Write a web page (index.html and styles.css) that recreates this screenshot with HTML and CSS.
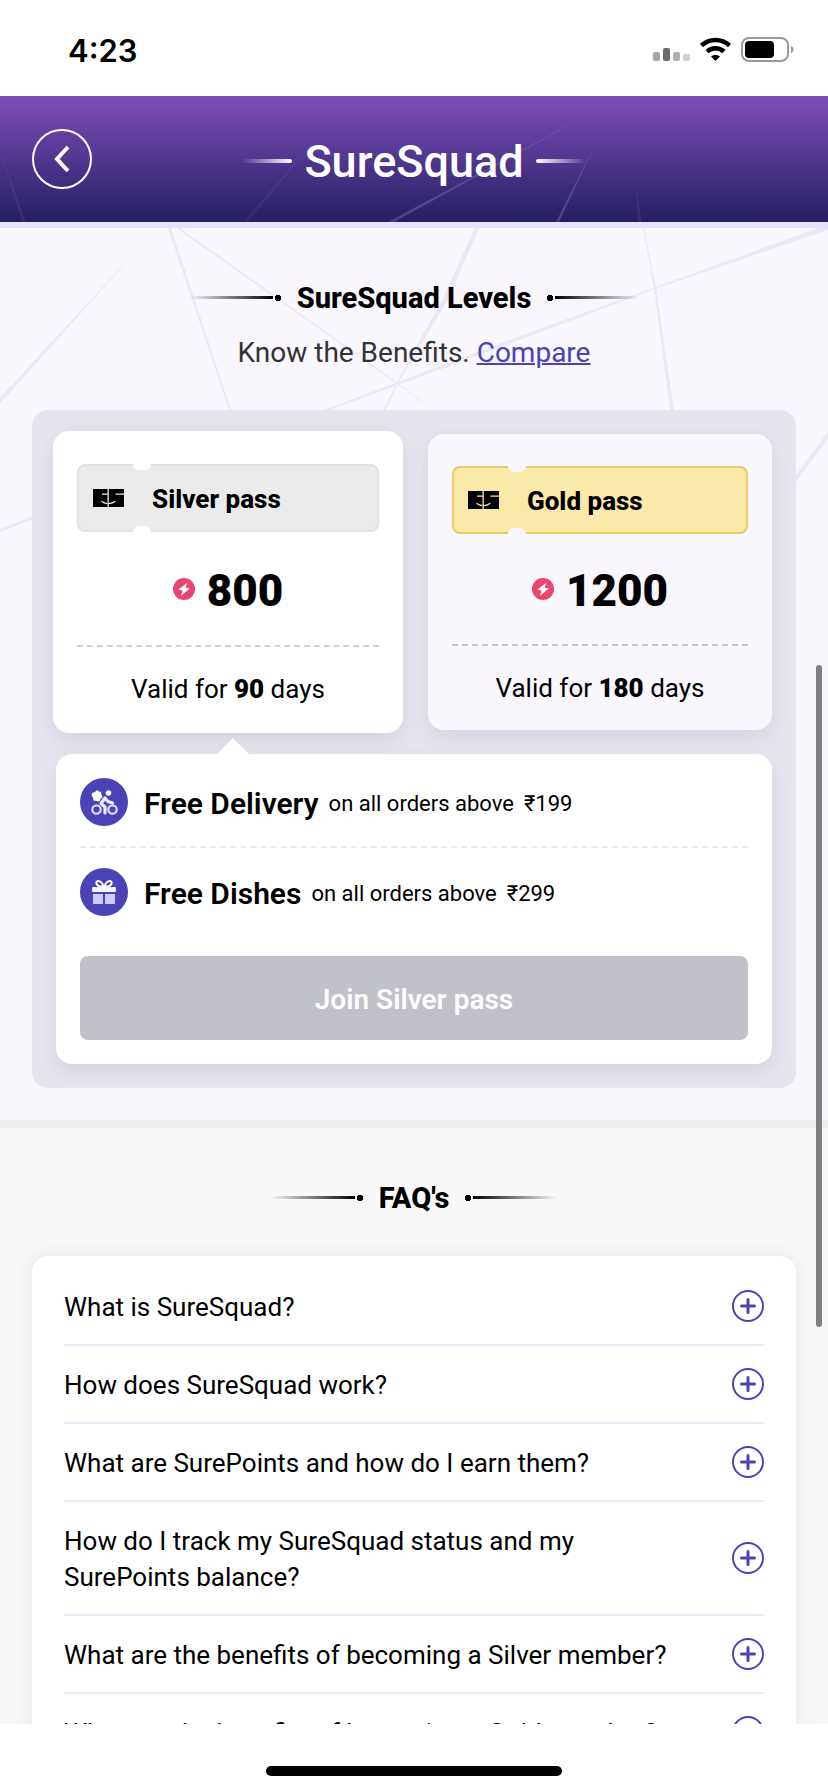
FILE: index.html
```html
<!DOCTYPE html>
<html lang="en">
<head>
  <meta charset="UTF-8" />
  <meta name="viewport" content="width=device-width, initial-scale=1" />
  <title>SureSquad</title>
  <link rel="stylesheet" href="styles.css">
</head>
<body>
  <!-- shared icons -->
  <svg class="sprite" aria-hidden="true">
    <symbol id="icon-es" viewBox="0 0 31 18">
      <path d="M0 0h14.500v18H0zM15.800 0H31v18H15.800z" fill="#000" />
      <path d="M9 5.200h6M22.500 5.200H31M8.500 12.200q2.500 2.200 6 2.400M15.800 14.600q4-.2 6.500-2.400" fill="none" stroke="currentColor" stroke-width="1.200" />
    </symbol>
    <symbol id="icon-bolt" viewBox="0 0 22 22">
      <circle cx="11" cy="11" r="11" fill="#e8456f" />
      <path d="M14.500 4.500 5.500 11.500l4.200 1.200-1.800 5.300 8.800-7.600-4.300-.9z" fill="#fff" />
    </symbol>
    <symbol id="icon-plus" viewBox="0 0 32 32">
      <circle cx="16" cy="16" r="15" fill="none" stroke="#4a42b5" stroke-width="2" />
      <path d="M16 9.500v13M9.500 16h13" fill="none" stroke="#4a42b5" stroke-width="3" stroke-linecap="round" />
    </symbol>
  </svg>

  <div class="app">
    <div class="status-bar">
      <span class="time">4:23</span>
      <svg class="status-icons" width="144" height="28" viewBox="0 0 144 28" aria-hidden="true">
        <rect x="1" y="16" width="7" height="9" rx="2" fill="#a5a5a5" />
        <rect x="11" y="12" width="7" height="13" rx="2" fill="#6b6b6b" />
        <rect x="21" y="16" width="7" height="9" rx="2" fill="#b0b0b0" />
        <rect x="31" y="18" width="7" height="7" rx="2" fill="#cfcfcf" />
        <g fill="none" stroke="#000" stroke-width="4.500">
          <path d="M49.500 9.500a20.500 20.500 0 0 1 28 0" />
          <path d="M55 15.500a12.500 12.500 0 0 1 17 0" />
        </g>
        <path d="M63.500 25l-4.500-4.600q4.500-3.400 9 0z" />
        <rect x="90" y="2" width="46" height="23" rx="7" fill="none" stroke="#999" stroke-width="2" />
        <rect x="93" y="5" width="29" height="17" rx="4" />
        <path d="M139 9.500q5 4 0 8z" fill="#999" />
      </svg>
    </div>

    <header class="header">
      <svg class="header-lines" viewBox="0 0 828 126" preserveAspectRatio="xMidYMin slice" aria-hidden="true">
        <path d="M586 20 388 126h6z" opacity=".22" />
        <path d="M595 49 556 126h3z" opacity=".22" />
        <path d="M636 91 638 126h4z" opacity=".08" />
        <path d="M332 24 243 126h5z" opacity=".06" />
        <path d="M0 54 22 126h4z" opacity=".08" />
      </svg>
      <button class="back" type="button" aria-label="Back">
        <svg width="18" height="28" viewBox="0 0 18 28" aria-hidden="true">
          <path d="M15 2 4 14l11 12" fill="none" stroke="#fff" stroke-width="4" />
        </svg>
      </button>
      <h1 class="header-title">SureSquad</h1>
    </header>

    <main class="content">
      <section class="levels">
        <svg class="levels-lines" viewBox="0 0 828 320" preserveAspectRatio="xMidYMin slice" aria-hidden="true">
          <path d="M148 10-3 173v6z" />
          <path d="M168 0h3l60 182h-2z" />
          <path d="M176 0h4l218 155 40 31-41-30z" />
          <path d="M475 0h4l-30 70-51 85-12 27h-3l14-28 46-84z" />
          <path d="M643 0h1l12 60 18 122h-4l-16-122z" />
          <path d="M818 0h10v2L655 61 530 108 398 157l-68 25h-6l74-28 130-49 125-45z" />
          <path d="M828 204 792 252v7l36-48z" />
          <path d="M0 301 36 287v3L0 304z" />
        </svg>
        <h2 class="section-title">SureSquad Levels</h2>
        <p class="subtitle">Know the Benefits. <a href="#compare">Compare</a></p>

        <div class="panel">
          <div class="passes">
            <article class="pass silver active">
              <div class="ticket">
                <svg class="es" aria-hidden="true"><use href="#icon-es" /></svg>
                <h3>Silver pass</h3>
              </div>
              <div class="points">
                <svg class="bolt" aria-hidden="true"><use href="#icon-bolt" /></svg>
                <span>800</span>
              </div>
              <p class="valid">Valid for <b>90</b> days</p>
            </article>
            <article class="pass gold">
              <div class="ticket">
                <svg class="es" aria-hidden="true"><use href="#icon-es" /></svg>
                <h3>Gold pass</h3>
              </div>
              <div class="points">
                <svg class="bolt" aria-hidden="true"><use href="#icon-bolt" /></svg>
                <span>1200</span>
              </div>
              <p class="valid">Valid for <b>180</b> days</p>
            </article>
          </div>

          <div class="benefits">
            <ul class="benefit-list">
              <li class="benefit">
                <svg class="benefit-icon" viewBox="0 0 48 48" aria-hidden="true">
                  <circle cx="24" cy="24" r="24" fill="#4a42b5" />
                  <g fill="none" stroke="#dcdaff" stroke-width="2.200">
                    <circle cx="16.500" cy="31.500" r="4.200" />
                    <circle cx="32.500" cy="31.500" r="4.200" />
                  </g>
                  <path d="M12 15l3-1 2-2 2 1.500 2 .5.500 3 1 2-2 2-1 2.500-3-.5-3-.5-.5-3-1.500-2z" fill="#fff" />
                  <circle cx="28.500" cy="15" r="2.800" fill="#fff" />
                  <path d="M25 20l3 3.500 4.500 1.500M25 20l-4 5.500 4 3.500v6" fill="none" stroke="#eeedff" stroke-width="3.200" stroke-linecap="round" stroke-linejoin="round" />
                </svg>
                <strong>Free Delivery</strong>
                <span>on all orders above</span>
                <span>₹199</span>
              </li>
              <li class="benefit">
                <svg class="benefit-icon" viewBox="0 0 48 48" aria-hidden="true">
                  <circle cx="24" cy="24" r="24" fill="#4a42b5" />
                  <path d="M23.500 19c-1-4-3-6-5.500-6-3 0-2.500 6 5.500 6zM24.500 19c1-4 3-6 5.500-6 3 0 2.500 6-5.500 6z" fill="none" stroke="#fff" stroke-width="2" />
                  <rect x="12" y="19" width="24" height="5" rx="1" fill="#f6f5ff" />
                  <path d="M13 26h10v10h-9q-1 0-1-1zM25 26h10v9q0 1-1 1h-9z" fill="#cfccfa" />
                </svg>
                <strong>Free Dishes</strong>
                <span>on all orders above</span>
                <span>₹299</span>
              </li>
            </ul>
            <button class="join" type="button" disabled>Join Silver pass</button>
          </div>
        </div>
      </section>

      <section class="faq">
        <h2 class="section-title">FAQ's</h2>
        <div class="faq-card">
          <button class="question" type="button"><span>What is SureSquad?</span><svg class="plus" aria-hidden="true"><use href="#icon-plus" /></svg></button>
          <button class="question" type="button"><span>How does SureSquad work?</span><svg class="plus" aria-hidden="true"><use href="#icon-plus" /></svg></button>
          <button class="question" type="button"><span>What are SurePoints and how do I earn them?</span><svg class="plus" aria-hidden="true"><use href="#icon-plus" /></svg></button>
          <button class="question" type="button"><span>How do I track my SureSquad status and my SurePoints balance?</span><svg class="plus" aria-hidden="true"><use href="#icon-plus" /></svg></button>
          <button class="question" type="button"><span>What are the benefits of becoming a Silver member?</span><svg class="plus" aria-hidden="true"><use href="#icon-plus" /></svg></button>
          <button class="question" type="button"><span>What are the benefits of becoming a Gold member?</span><svg class="plus" aria-hidden="true"><use href="#icon-plus" /></svg></button>
        </div>
      </section>
    </main>

    <div class="home-bar"><span></span></div>
    <div class="scroll-thumb"></div>
  </div>
</body>
</html>
```

FILE: styles.css
```css
* {
  box-sizing: border-box;
}
body {
  margin: 0;
  font-family: Roboto, "Noto Sans", sans-serif;
  color: #000;
  background: #fff;
}
h1, h2, h3, p, ul {
  margin: 0;
  padding: 0;
}
button {
  font-family: inherit;
  border: none;
  cursor: pointer;
}
.sprite {
  position: absolute;
  width: 0;
  height: 0;
}
.app {
  position: relative;
  display: flex;
  flex-direction: column;
  height: 100vh;
  overflow: hidden;
}

/* status bar */
.status-bar {
  display: flex;
  flex: none;
  justify-content: space-between;
  align-items: center;
  height: 96px;
  padding: 4px 32px 0 68px;
}
.time {
  font-family: Inter, sans-serif;
  font-size: 31px;
  font-weight: 600;
}

/* header */
.header {
  position: relative;
  display: flex;
  flex: none;
  align-items: center;
  justify-content: center;
  height: 132px;
  border-bottom: 6px solid #e8e2f8;
  background: linear-gradient(#7e4db8, #50378f 50%, #261f63);
  background-clip: padding-box;
}
.header-lines {
  position: absolute;
  inset: 0;
  width: 100%;
  height: 100%;
  fill: #cdb8ff;
}
.back {
  position: absolute;
  left: 32px;
  display: flex;
  align-items: center;
  justify-content: center;
  width: 60px;
  height: 60px;
  padding: 0;
  border: 2px solid #fff;
  border-radius: 50%;
  background: none;
}
.header-title {
  position: relative;
  display: flex;
  align-items: center;
  gap: 12px;
  padding-top: 4px;
  color: #fff;
  font-size: 45px;
  font-weight: 500;
}
.header-title::before,
.header-title::after {
  content: "";
  width: 50px;
  height: 4px;
  border-radius: 2px;
  background: linear-gradient(to right, transparent, #fff);
}
.header-title::after {
  background: linear-gradient(to left, transparent, #fff);
}

.content {
  flex: 1;
  min-height: 0;
  overflow: hidden;
  background: #f8f8f8;
}
.section-title {
  display: flex;
  align-items: center;
  justify-content: center;
  gap: 16px;
  font-size: 29px;
  line-height: 40px;
  font-weight: 800;
}
.section-title::before,
.section-title::after {
  content: "";
  width: 92px;
  height: 6px;
  background:
    radial-gradient(circle at 89px 3px, #000 3px, transparent 3px),
    linear-gradient(to right, transparent, #000) 0 1px / 84px 3px no-repeat;
}
.section-title::after {
  background:
    radial-gradient(circle at 3px 3px, #000 3px, transparent 3px),
    linear-gradient(to left, transparent, #000) 8px 1px / 84px 3px no-repeat;
}

/* levels */
.levels {
  position: relative;
  padding: 50px 32px 32px;
  border-bottom: 8px solid #eee;
  background: #f9f6fe;
}
.levels-lines {
  position: absolute;
  top: 0;
  left: 0;
  width: 100%;
  height: 320px;
  fill: #ebe8f5;
}
.levels .section-title,
.subtitle,
.panel {
  position: relative;
}
.subtitle {
  margin: 15px 0 37px;
  color: #333;
  font-size: 28px;
  line-height: 40px;
  text-align: center;
}
.subtitle a {
  color: #4a42b5;
  text-decoration-thickness: 2px;
}
.panel {
  padding: 24px;
  border-radius: 16px;
  background: #e7e4ef;
}
.passes {
  display: grid;
  grid-template-columns: 1fr 1fr;
  gap: 28px;
}
.pass {
  padding: 32px 24px 24px;
  border-radius: 16px;
  background: #f9f6fe;
  box-shadow: 0 8px 20px rgba(60, 50, 80, 0.1);
}
.pass.active {
  margin: -3px;
  padding: 33px 24px 24px;
  background: #fff;
}
.ticket {
  position: relative;
  display: flex;
  align-items: center;
  gap: 28px;
  height: 68px;
  padding: 0 14px;
  border: 2px solid #e2e2e2;
  border-radius: 8px;
  background: #ebebeb;
  line-height: 34px;
}
.gold .ticket {
  border-color: #e9cc66;
  background: #fbe9a9;
}
/* punched notches */
.ticket::before,
.ticket::after {
  content: "";
  position: absolute;
  left: 54px;
  top: -2px;
  width: 18px;
  height: 6px;
  border-radius: 0 0 9px 9px;
  background: #fff;
}
.ticket::after {
  top: auto;
  bottom: -2px;
  border-radius: 9px 9px 0 0;
}
.gold .ticket::before,
.gold .ticket::after {
  background: #f9f6fe;
}
.es {
  width: 31px;
  height: 18px;
  color: #ebebeb;
}
.gold .es {
  color: #fbe9a9;
}
.ticket h3 {
  padding-top: 2px;
  font-size: 26px;
  font-weight: 800;
}
.points {
  display: flex;
  align-items: center;
  justify-content: center;
  gap: 12px;
  height: 112px;
  border-bottom: 2px dashed #c6c4cc;
  font-size: 44px;
  font-weight: 900;
}
.points span {
  padding-top: 4px;
}
.active .points {
  height: 115px;
  border-color: #d2d2d2;
}
.bolt {
  width: 22px;
  height: 22px;
}
.valid {
  padding-top: 24px;
  font-size: 26px;
  line-height: 36px;
  text-align: center;
}
.valid b {
  font-weight: 900;
}

/* benefits of the selected pass */
.benefits {
  position: relative;
  margin-top: 24px;
  padding: 24px;
  border-radius: 16px;
  background: #fff;
  box-shadow: 0 8px 20px rgba(60, 50, 80, 0.1);
}
.benefits::before {
  content: "";
  position: absolute;
  left: 161px;
  top: -16px;
  border: 16px solid transparent;
  border-top: 0;
  border-bottom-color: #fff;
}
.benefit {
  display: flex;
  align-items: center;
  gap: 10px;
  font-size: 22px;
}
.benefit + .benefit {
  margin-top: 20px;
  padding-top: 20px;
  border-top: 2px dashed #ececec;
}
.benefit-icon {
  width: 48px;
  height: 48px;
  margin-right: 6px;
}
.benefit strong,
.benefit span {
  padding-top: 2px;
}
.benefit strong {
  font-size: 30px;
  font-weight: 600;
}
.join {
  width: 100%;
  height: 84px;
  margin-top: 40px;
  padding-top: 4px;
  border-radius: 8px;
  background: #c1c1c9;
  color: #fff;
  font-size: 28px;
  font-weight: 600;
}

/* faq */
.faq {
  padding: 50px 32px 32px;
}
.faq-card {
  margin-top: 38px;
  padding: 12px 32px;
  border-radius: 16px;
  background: #fff;
  box-shadow: 0 0 24px rgba(0, 0, 0, 0.08);
}
.question {
  display: flex;
  align-items: center;
  justify-content: space-between;
  gap: 40px;
  width: 100%;
  padding: 19px 0;
  border-bottom: 2px solid #ecebf9;
  background: none;
  color: #000;
  font-size: 26px;
  line-height: 36px;
  text-align: left;
}
.question span {
  padding-top: 2px;
}
.plus {
  flex: none;
  width: 32px;
  height: 32px;
}

.home-bar {
  display: flex;
  flex: none;
  justify-content: center;
  height: 68px;
  padding-top: 42px;
  background: #fff;
}
.home-bar span {
  width: 296px;
  height: 10px;
  border-radius: 5px;
  background: #000;
}
.scroll-thumb {
  position: absolute;
  top: 665px;
  right: 6px;
  width: 6px;
  height: 662px;
  border-radius: 3px;
  background: #808083;
}
```
